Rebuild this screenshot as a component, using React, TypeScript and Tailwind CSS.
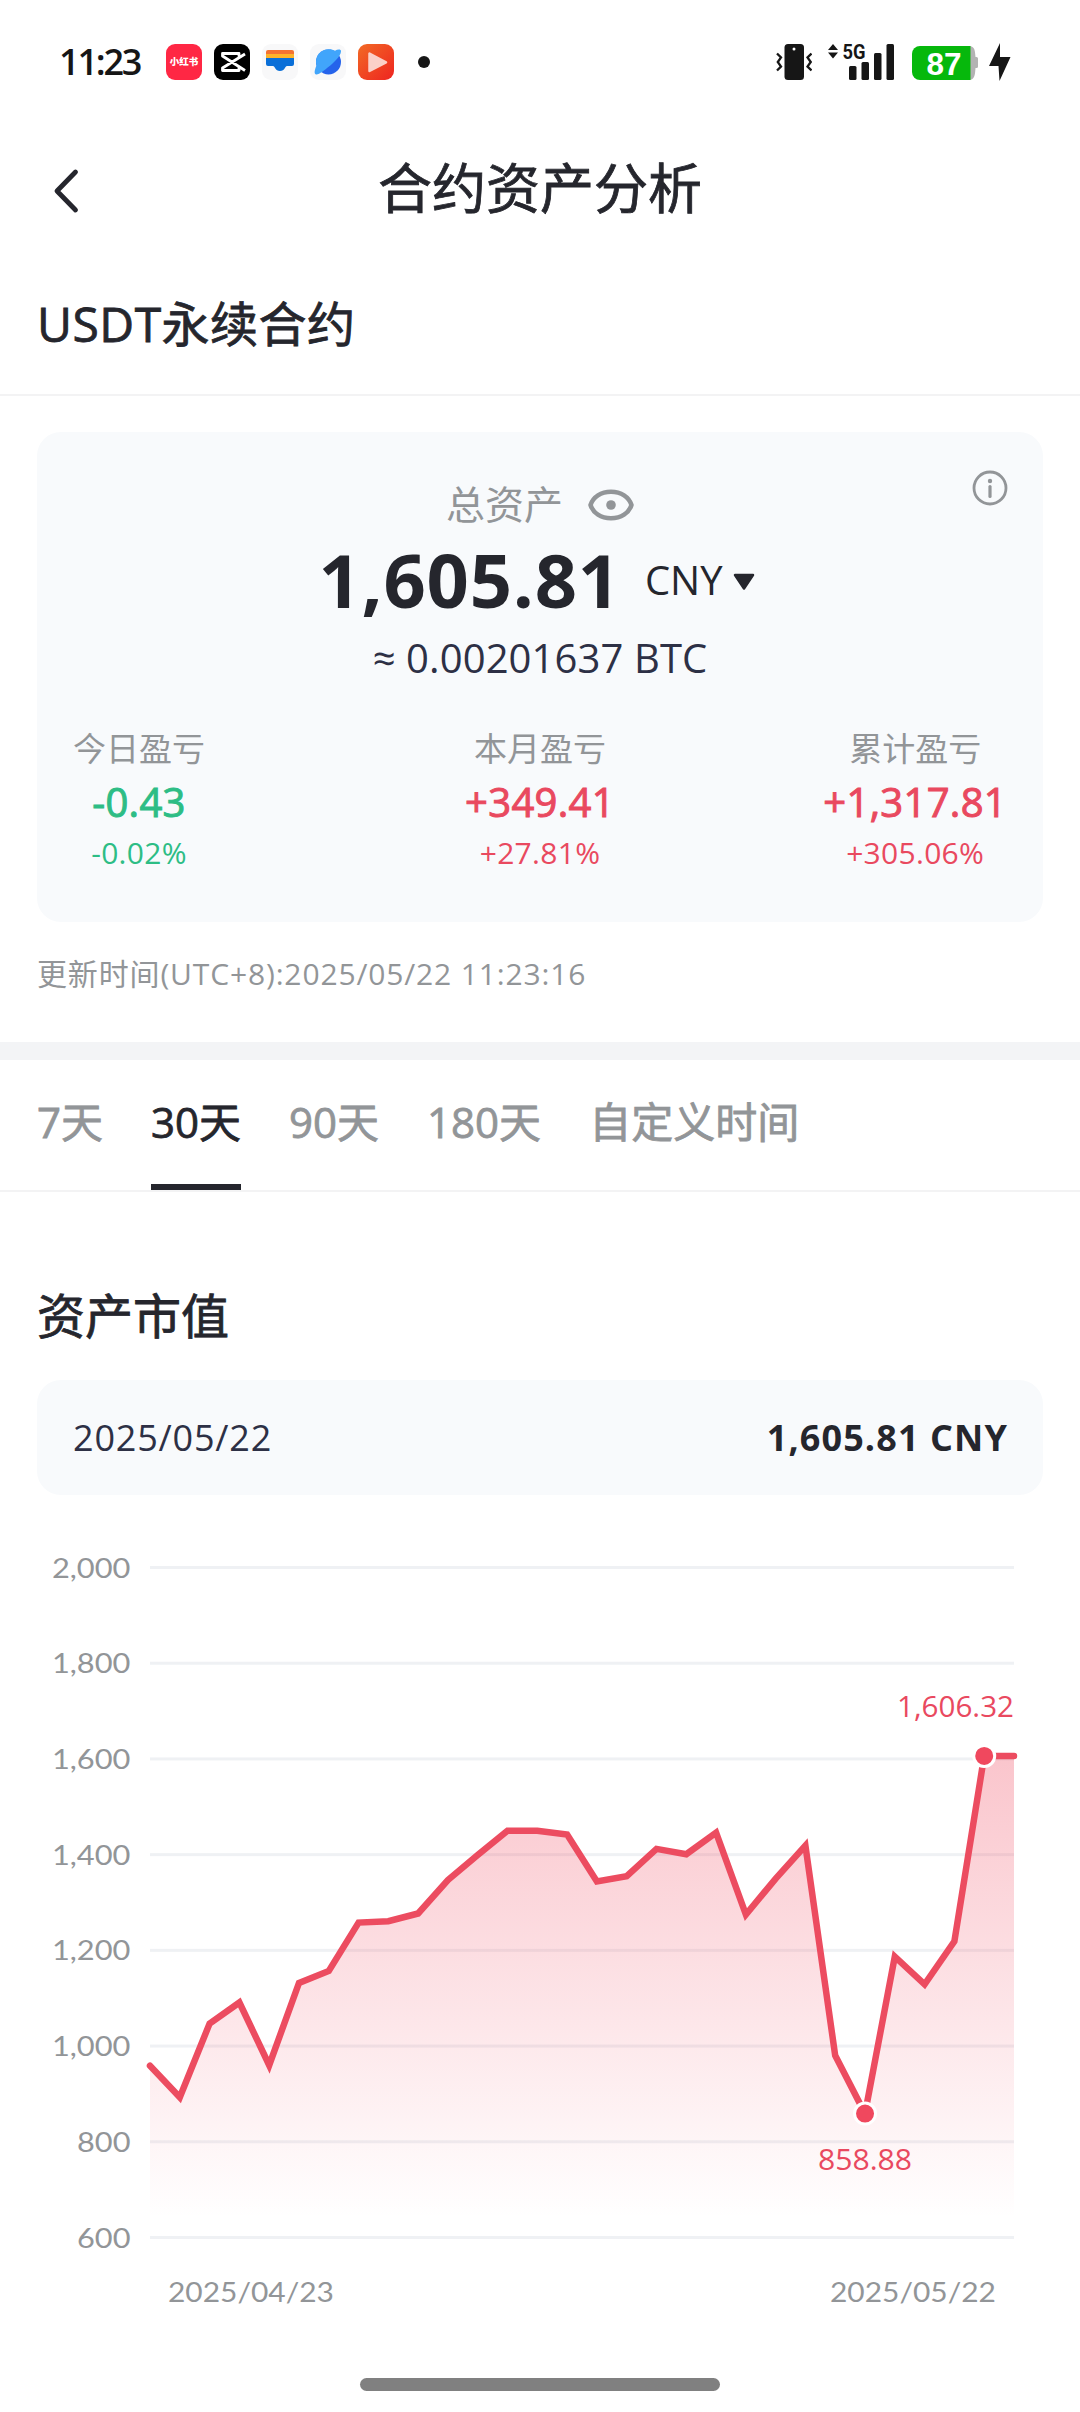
import { useState } from 'react';

const RANGES = ['7天', '30天', '90天', '180天', '自定义时间'];

const STATS = [
  { label: '今日盈亏', value: '-0.43', percent: '-0.02%', color: 'text-[#2dbd85]', align: 'justify-self-start' },
  { label: '本月盈亏', value: '+349.41', percent: '+27.81%', color: 'text-[#e9495f]', align: 'justify-self-center' },
  { label: '累计盈亏', value: '+1,317.81', percent: '+305.06%', color: 'text-[#e9495f]', align: 'justify-self-end' },
];

const SERIES = [
  959, 893, 1047, 1091, 960, 1132, 1157, 1258, 1261, 1277, 1347, 1399, 1450, 1450, 1442, 1344, 1355,
  1412, 1401, 1446, 1275, 1350, 1419, 980, 858.88, 1187, 1129, 1219, 1606.32, 1605.81,
];

const TICKS = [2000, 1800, 1600, 1400, 1200, 1000, 800, 600];

const PLOT = { left: 150, right: 1014, top: 72.5, bottom: 742.5 };

const toX = (i: number) => PLOT.left + (i * (PLOT.right - PLOT.left)) / (SERIES.length - 1);
const toY = (v: number) => PLOT.top + ((2000 - v) * (PLOT.bottom - PLOT.top)) / 1400;

function StatusBar() {
  return (
    <div className="flex h-[124px] items-center justify-between pl-[59px] pr-[69px]">
      <div className="flex items-center">
        <span className="w-[107px] text-[36px] font-semibold leading-none tracking-[-2.2px] text-[#161616]">
          11:23
        </span>
        <div className="flex items-center gap-3">
          <span className="flex size-9 items-center justify-center rounded-[9px] bg-[#ff2744] text-[9.5px] font-black leading-none text-white">
            小红书
          </span>
          <svg viewBox="0 0 36 36" className="size-9" aria-hidden>
            <rect width="36" height="36" rx="9" fill="#000" />
            <path
              d="M31 10 8.500 24v2.500h16.500v-3M31 26.500 8.500 12V9.500h16.500v3"
              fill="none"
              stroke="#fff"
              strokeWidth="2.800"
              strokeLinejoin="round"
            />
          </svg>
          <svg viewBox="0 0 36 36" className="size-9" aria-hidden>
            <rect width="36" height="36" rx="9" fill="#f8f8f9" />
            <path d="M6 6h24a2 2 0 0 1 2 2v3H4V8a2 2 0 0 1 2-2z" fill="#f47332" />
            <path d="M4 10h28v5H4z" fill="#fdb32b" />
            <path d="M4 14h28v6a2 2 0 0 1-2 2h-5c-2 0-2 5-7 5s-5-5-7-5H6a2 2 0 0 1-2-2z" fill="#0a6fd8" />
          </svg>
          <svg viewBox="0 0 36 36" className="size-9" aria-hidden>
            <rect width="36" height="36" rx="9" fill="#f8f8f9" />
            <circle cx="18.500" cy="18" r="12.500" fill="#2563eb" />
            <path
              d="M6.500 21.500C4 12 11 5 19 5.300c2.500 0 4.500.7 6 1.500 2.500-1.500 6-1.800 6 .4 0 5-8 12-12 15.300-4.500 3.500-10 8.500-13 8-2.500-.8-1-5.500.5-9z"
              fill="#41a5fb"
            />
          </svg>
          <svg viewBox="0 0 36 36" className="size-9" aria-hidden>
            <defs>
              <linearGradient id="player" x1="0" y1="0" x2="1" y2="1">
                <stop offset="0" stopColor="#f26a25" />
                <stop offset="1" stopColor="#ee2420" />
              </linearGradient>
            </defs>
            <rect width="36" height="36" rx="9" fill="url(#player)" />
            <path
              d="M11.500 9.500v17.500l16.500-8.700z"
              fill="#fbd0c8"
              stroke="#fbd0c8"
              strokeWidth="2.500"
              strokeLinejoin="round"
            />
          </svg>
        </div>
        <span className="ml-6 size-3 rounded-full bg-[#161616]" />
      </div>

      <div className="flex items-center">
        <svg viewBox="0 0 36 36" className="size-9" aria-hidden>
          <rect x="8.500" width="19.500" height="36" rx="3.500" fill="#161616" />
          <circle cx="18" cy="5" r="1.500" fill="#fff" />
          <path
            d="M1 9.500 5 13.500 1.800 18 5 22.500 1 26.500M35.500 9.500 31.500 13.500 34.700 18 31.500 22.500 35.500 26.500"
            fill="none"
            stroke="#161616"
            strokeWidth="2.300"
          />
        </svg>
        <svg viewBox="0 0 68 36" className="ml-[15px] h-9 w-[68px] overflow-visible" aria-hidden>
          <path d="M6 0l5 6H1zM6 14.500l5-6H1z" fill="#161616" />
          <text
            x="15.500"
            y="14.500"
            fontFamily="Roboto"
            fontWeight="700"
            fontSize="20"
            textLength="23"
            lengthAdjust="spacingAndGlyphs"
            fill="#161616"
          >
            5G
          </text>
          <rect x="22" y="22" width="7.500" height="14" rx="1.500" fill="#161616" />
          <rect x="34.500" y="18" width="7.500" height="18" rx="1.500" fill="#161616" />
          <rect x="47" y="9" width="7.500" height="27" rx="1.500" fill="#161616" />
          <rect x="59.500" y="0" width="7.500" height="36" rx="1.500" fill="#161616" />
        </svg>
        <svg viewBox="0 0 67 36" className="ml-[17px] h-9 w-[67px] overflow-visible" aria-hidden>
          <path
            d="M57 2c6 0 6 5 6.500 11h1a1.500 1.500 0 0 1 1.500 1.500v8a1.500 1.500 0 0 1-1.500 1.500h-1c-.5 6-.5 12-6.500 12z"
            fill="#b3b3b3"
          />
          <path d="M8 2h50.500v34H8a8 8 0 0 1-8-8V10a8 8 0 0 1 8-8z" fill="#06b80c" />
          <text
            x="14.500"
            y="30.500"
            fontFamily="Liberation Sans"
            fontWeight="700"
            fontSize="31"
            textLength="35"
            lengthAdjust="spacingAndGlyphs"
            fill="#fff"
          >
            87
          </text>
        </svg>
        <svg viewBox="0 0 22 38" className="ml-[10px] h-[38px] w-[22px]" aria-hidden>
          <path d="M11 0 0 23h9.500L10.500 38 21.500 14H11z" fill="#161616" />
        </svg>
      </div>
    </div>
  );
}

function AssetCard() {
  return (
    <section className="relative mx-[37px] mt-9 flex h-[490px] flex-col items-center rounded-3xl bg-[#f8fafc] pt-[52px]">
      <svg viewBox="0 0 36 36" className="absolute right-[35px] top-[38px] size-9" aria-hidden>
        <circle cx="18" cy="18" r="16" fill="none" stroke="#929598" strokeWidth="2.800" />
        <circle cx="18" cy="11" r="2.200" fill="#929598" />
        <path d="M18 16.500v10" stroke="#929598" strokeWidth="3.200" strokeLinecap="round" />
      </svg>

      <div className="flex h-10 items-center gap-[25px]">
        <span className="text-[39px] leading-10 text-[#929598]">总资产</span>
        <svg viewBox="0 0 46 32" className="mt-[2px] h-8 w-[46px]" aria-hidden>
          <path
            d="M2.500 16C5 8 13 2.700 23 2.700S41 8 43.500 16C41 24 33 29.300 23 29.300S5 24 2.500 16z"
            fill="none"
            stroke="#929598"
            strokeWidth="4.500"
            strokeLinejoin="round"
          />
          <circle cx="23" cy="16" r="4.800" fill="#929598" />
        </svg>
      </div>

      <div className="mt-5 flex h-[72px] items-center pr-[7px]">
        <span className="text-[74px] font-bold leading-[72px] tracking-[0.8px] text-[#25262d]">1,605.81</span>
        <span className="ml-6 text-[40px] leading-[72px] text-[#25262d]">CNY</span>
        <svg viewBox="0 0 22 18" className="ml-[10px] mt-1 h-[18px] w-[22px]" aria-hidden>
          <path d="M2 2h18L11 15.500z" fill="#25262d" stroke="#25262d" strokeWidth="2.500" strokeLinejoin="round" />
        </svg>
      </div>

      <p className="mt-[18px] h-12 text-[40px] leading-[48px] tracking-[0.1px] text-[#2d3045]">≈ 0.00201637 BTC</p>

      <div className="mt-[47px] grid w-full grid-cols-3 px-9">
        {STATS.map((stat) => (
          <div
            key={stat.label}
            className={`flex flex-col items-center whitespace-nowrap ${stat.align} ${stat.color}`}
          >
            <span className="text-[33px] leading-10 text-[#929598]">{stat.label}</span>
            <span className="mt-[13px] text-[40px] leading-10 tracking-[0.3px] [-webkit-text-stroke:1px_currentColor]">
              {stat.value}
            </span>
            <span className="mt-[15px] text-[30px] leading-8 tracking-[0.3px]">{stat.percent}</span>
          </div>
        ))}
      </div>
    </section>
  );
}

function AssetChart() {
  const line = SERIES.map((v, i) => `${i === 0 ? 'M' : 'L'}${toX(i).toFixed(1)} ${toY(v).toFixed(1)}`).join('');
  const area = `${line}L${PLOT.right} ${PLOT.bottom}L${PLOT.left} ${PLOT.bottom}Z`;

  return (
    <svg viewBox="0 0 1080 845" className="block h-[845px] w-full">
      <defs>
        <linearGradient id="area" x1="0" y1="0" x2="0" y2="1">
          <stop offset="0" stopColor="#f04a60" stopOpacity="0.32" />
          <stop offset="0.96" stopColor="#f04a60" stopOpacity="0" />
        </linearGradient>
      </defs>

      {TICKS.map((tick) => (
        <g key={tick}>
          <rect x={PLOT.left} y={toY(tick) - 1.5} width={PLOT.right - PLOT.left} height="3" fill="#eff1f4" />
          <text
            x={tick < 1000 ? 77 : 52}
            y={toY(tick) + 10}
            fontFamily="Lato"
            fontSize="27"
            textLength={tick < 1000 ? 53.5 : 78.5}
            lengthAdjust="spacingAndGlyphs"
            fill="#929598"
          >
            {tick.toLocaleString('en-US')}
          </text>
        </g>
      ))}

      <path d={area} fill="url(#area)" />
      <path d={line} fill="none" stroke="#ec4c60" strokeWidth="6.500" strokeLinecap="round" strokeLinejoin="miter" />

      <circle cx={toX(28)} cy={toY(1606.32)} r="10.500" fill="#f0485e" stroke="#fff" strokeWidth="3" />
      <circle cx={toX(24)} cy={toY(858.88)} r="10.500" fill="#f0485e" stroke="#fff" strokeWidth="3" />

      <g fontSize="30" fill="#e9495f">
        <text x="897" y="222" textLength="117" lengthAdjust="spacingAndGlyphs">
          1,606.32
        </text>
        <text x="818" y="675" textLength="94" lengthAdjust="spacingAndGlyphs">
          858.88
        </text>
      </g>

      <g fontFamily="Lato" fontSize="27" fill="#929598">
        <text x="168" y="807" textLength="166" lengthAdjust="spacingAndGlyphs">
          2025/04/23
        </text>
        <text x="830" y="807" textLength="166" lengthAdjust="spacingAndGlyphs">
          2025/05/22
        </text>
      </g>
    </svg>
  );
}

export default function App() {
  const [range, setRange] = useState('30天');

  return (
    <main className="flex h-[2412px] w-[1080px] flex-col bg-white font-['Open_Sans','Noto_Sans_CJK_SC',sans-serif] text-[#25262d]">
      <StatusBar />

      <header className="flex h-[132px] items-center justify-between px-[51px]">
        <button type="button" aria-label="返回" className="mt-[2px] w-[30px]">
          <svg viewBox="0 0 30 46" className="h-[46px] w-[30px]" aria-hidden>
            <path
              d="M24.500 4 6 23l18.500 19"
              fill="none"
              stroke="#25262d"
              strokeWidth="4.800"
              strokeLinecap="round"
              strokeLinejoin="round"
            />
          </svg>
        </button>
        <h1 className="pb-1 text-[54px] leading-[72px] [-webkit-text-stroke:0.8px_currentColor]">合约资产分析</h1>
        <span className="w-[30px]" />
      </header>

      <div className="flex h-[140px] items-center border-b-2 border-[#f3f3f4] px-[37px] pb-[3px]">
        <h2 className="text-[48px] leading-[60px] tracking-[0.5px] [-webkit-text-stroke:0.8px_currentColor]">
          USDT永续合约
        </h2>
      </div>

      <AssetCard />

      <p className="mt-8 px-[37px] text-[30px] leading-10 tracking-[0.85px] text-[#929598]">
        更新时间(UTC+8):2025/05/22 11:23:16
      </p>
      <div className="mt-12 h-[18px] bg-[#f3f4f6]" />

      <nav className="flex h-[132px] gap-12 border-b-2 border-[#f3f3f4] px-[37px]">
        {RANGES.map((item) => (
          <button
            key={item}
            type="button"
            onClick={() => setRange(item)}
            className={`h-[130px] whitespace-nowrap border-b-[6px] pb-[38px] pt-[38px] text-[42px] leading-[48px] [-webkit-text-stroke:0.8px_currentColor] ${
              range === item ? 'border-[#25262d] text-[#25262d]' : 'border-transparent text-[#929598]'
            }`}
          >
            {item}
          </button>
        ))}
      </nav>

      <h2 className="mt-24 px-[37px] text-[48px] leading-[56px] [-webkit-text-stroke:0.8px_currentColor]">资产市值</h2>

      <div className="mx-[37px] mt-9 flex h-[115px] items-center justify-between rounded-3xl bg-[#f8fafc] px-9 text-[36px]">
        <span className="tracking-[0.8px] text-[#2d3045]">2025/05/22</span>
        <span className="-mr-px font-bold tracking-[1.1px]">1,605.81 CNY</span>
      </div>

      <AssetChart />

      <div className="mx-auto mt-[38px] h-[13px] w-[360px] rounded-full bg-[#808080]" />
    </main>
  );
}
